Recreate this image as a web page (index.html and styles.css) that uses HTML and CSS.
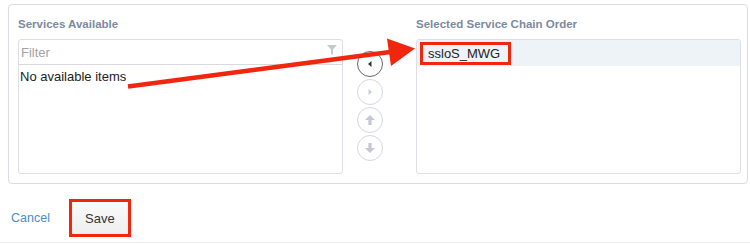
FILE: index.html
```html
<!DOCTYPE html>
<html>
<head>
<meta charset="utf-8">
<link rel="stylesheet" href="styles.css">
</head>
<body>
<div class="page">
  <div class="panel">
    <div class="col">
      <div class="label">Services Available</div>
      <div class="listbox">
        <div class="filter">
          <span class="placeholder">Filter</span>
          <svg class="funnel" width="10" height="10" viewBox="0 0 10 10"><path d="M0 0H10L6 4.5V10L4 8.5V4.5Z" fill="#c4c8cf"/></svg>
        </div>
        <div class="empty">No available items</div>
      </div>
    </div>
    <div class="mid">
      <div class="cbtn active">
        <svg width="8" height="8" viewBox="0 0 8 8"><path d="M2 4L5.5 1V7Z" fill="#333"/></svg>
      </div>
      <div class="cbtn">
        <svg width="8" height="8" viewBox="0 0 8 8"><path d="M6 4L2.5 1V7Z" fill="#c9cdd6"/></svg>
      </div>
      <div class="cbtn">
        <svg width="12" height="12" viewBox="0 0 12 12"><path d="M6 1L11 6H7.6V11H4.4V6H1Z" fill="#c3c8d2"/></svg>
      </div>
      <div class="cbtn">
        <svg width="12" height="12" viewBox="0 0 12 12"><path d="M6 11L11 6H7.6V1H4.4V6H1Z" fill="#c3c8d2"/></svg>
      </div>
    </div>
    <div class="col">
      <div class="label">Selected Service Chain Order</div>
      <div class="listbox">
        <div class="item"><span class="hl">ssloS_MWG</span></div>
      </div>
    </div>
  </div>
  <div class="footer">
    <a class="cancel">Cancel</a>
    <button class="save">Save</button>
  </div>
</div>
<svg class="annot" width="750" height="244" viewBox="0 0 750 244">
  <line x1="128" y1="86.5" x2="390" y2="52" stroke="#f0260f" stroke-width="4.5"/>
  <polygon points="415,48.5 387,38.5 391,66" fill="#f0260f"/>
</svg>
</body>
</html>
```
FILE: styles.css
```css
html, body {
  margin: 0;
  padding: 0;
  background: #fff;
  font-family: "Liberation Sans", Arial, sans-serif;
  color: #222;
}
.page {
  position: relative;
  width: 750px;
  height: 244px;
  overflow: hidden;
}
.page::after {
  content: "";
  position: absolute;
  left: 0;
  right: 0;
  top: 242px;
  height: 1px;
  background: #ececec;
}
.panel {
  margin: 4px 2px 0 8px;
  height: 180px;
  box-sizing: border-box;
  border: 1px solid #d9dce3;
  border-radius: 4px;
  padding: 10px 6px 9px 9px;
  display: flex;
}
.col {
  width: 325px;
  display: flex;
  flex-direction: column;
}
.label {
  font-size: 11.5px;
  font-weight: bold;
  color: #7c8aa4;
  height: 14px;
  line-height: 14px;
  margin-top: 2px;
  margin-bottom: 8px;
}
.listbox {
  flex: 1;
  border: 1px solid #dcdfe5;
  border-radius: 3px;
  box-sizing: border-box;
  overflow: hidden;
}
.filter {
  height: 24px;
  border-bottom: 1px solid #d6d9df;
  display: flex;
  align-items: center;
  justify-content: space-between;
  padding: 0 5px 0 2px;
}
.placeholder {
  font-size: 13px;
  color: #a2a2a2;
}
.funnel {
  margin-top: -4px;
}
.empty {
  font-size: 13px;
  color: #222;
  padding: 4px 0 0 1px;
  line-height: 15px;
}
.mid {
  width: 73px;
  display: flex;
  flex-direction: column;
  gap: 2px;
  padding: 36px 0 0 14px;
  box-sizing: border-box;
}
.cbtn {
  width: 26px;
  height: 26px;
  box-sizing: border-box;
  border: 1px solid #d5d8e0;
  border-radius: 50%;
  display: flex;
  align-items: center;
  justify-content: center;
  background: #fff;
}
.cbtn.active {
  border-color: #666;
}
.item {
  height: 26px;
  background: #eef3f7;
  display: flex;
  align-items: center;
  padding-left: 3px;
}
.hl {
  font-size: 13px;
  color: #222;
  border: 3px solid #f0260f;
  padding: 1px 8px 1px 5px;
  line-height: 15px;
}
.footer {
  display: flex;
  align-items: center;
  height: 38px;
  margin-top: 15px;
  padding-left: 11px;
}
.cancel {
  font-size: 12.5px;
  color: #4a8fcb;
  margin-right: 19px;
}
.save {
  font-family: "Liberation Sans", Arial, sans-serif;
  font-size: 13px;
  color: #333;
  width: 62px;
  height: 38px;
  box-sizing: border-box;
  border: 3px solid #f0260f;
  background: linear-gradient(#fafafa, #eeeeee);
  padding: 0;
}
.annot {
  position: absolute;
  left: 0;
  top: 0;
  pointer-events: none;
}
```
